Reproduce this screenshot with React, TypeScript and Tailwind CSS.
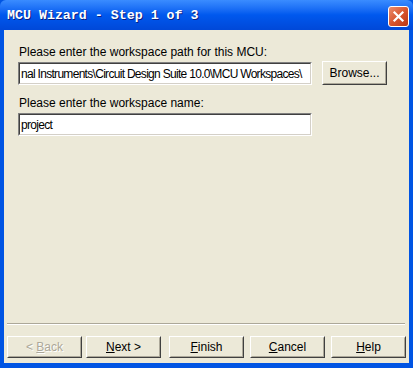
import React from 'react'

const ui = { fontFamily: '"Liberation Sans", Arial, sans-serif' }

function Btn({label,u,rest,disabled,className}:{label?:string,u:string,rest:string,disabled?:boolean,className?:string}){
  return (
    <div className={`h-[22px] border border-t-white border-l-white border-r-[#404040] border-b-[#404040] ${className||''}`}>
      <div className="h-full flex items-center justify-center border border-t-[#ece9d8] border-l-[#ece9d8] border-r-[#aca899] border-b-[#aca899] text-[12px] leading-none">
        <span className={disabled?'text-[#aca899] [text-shadow:1px_1px_0_#fff]':'text-black'}>
          {label}<span className="underline">{u}</span>{rest}
        </span>
      </div>
    </div>
  )
}

function Field({children}:{children:React.ReactNode}){
  return (
    <div className="h-[23px] w-[294px] border border-t-[#808080] border-l-[#808080] border-r-white border-b-white">
      <div className="h-full bg-white border border-t-[#404040] border-l-[#404040] border-r-[#d4d0c8] border-b-[#d4d0c8] flex items-center pl-[1px] overflow-hidden whitespace-nowrap text-[12px] tracking-[-0.7px] text-black">
        {children}
      </div>
    </div>
  )
}

export default function App(){
  return (
    <div className="w-[413px] h-[368px] flex flex-col bg-[#0054e3]" style={ui}>
      {/* title bar */}
      <div className="h-[30px] flex items-center justify-between pl-[7px] pr-[4px] bg-gradient-to-b from-[#3a8cff] via-[#0058ee] to-[#0048d8] rounded-t-[6px]">
        <span className="text-white font-bold text-[13.3px] mt-[1px] [text-shadow:1px_1px_0_#0a1e80]" style={{fontFamily:'"Liberation Mono", "Courier New", monospace'}}>MCU Wizard - Step 1 of 3</span>
        <div className="w-[21px] h-[21px] mt-[2px] rounded-[3px] border border-white bg-gradient-to-br from-[#ea8c6c] via-[#d8562f] to-[#bb3612] flex items-center justify-center">
          <svg width="13" height="13" viewBox="0 0 13 13"><path d="M2.5 2.5 L10.5 10.5 M10.5 2.5 L2.5 10.5" stroke="white" strokeWidth="2.2" strokeLinecap="square"/></svg>
        </div>
      </div>
      {/* body */}
      <div className="flex-1 mx-[4px] mb-[5px] bg-[#ece9d8] flex flex-col pl-[14px] pt-[15px]">
        <div className="h-[14px] leading-[14px] text-[12px] text-black ml-[1px]">Please enter the workspace path for this MCU:</div>
        <div className="flex items-start mt-[3px]">
          <Field>nal Instruments\Circuit Design Suite 10.0\MCU Workspaces\</Field>
          <Btn className="w-[65px] ml-[10px] h-[24px] -mt-[1px]" label="Browse..." u="" rest="" />
        </div>
        <div className="h-[14px] leading-[14px] text-[12px] text-black ml-[1px] mt-[11px]">Please enter the workspace name:</div>
        <div className="mt-[3px]">
          <Field>project</Field>
        </div>
        <div className="flex-1" />
        <div className="-ml-[11px] mr-[4px] border-t border-t-[#aca899] border-b border-b-white" />
        <div className="flex -ml-[11px] mt-[11px] mb-[5px]">
          <Btn className="w-[75px]" label="< " u="B" rest="ack" disabled />
          <Btn className="w-[75px] ml-[4px]" label="" u="N" rest="ext >" />
          <Btn className="w-[75px] ml-[8px]" label="" u="F" rest="inish" />
          <Btn className="w-[75px] ml-[6px]" label="" u="C" rest="ancel" />
          <Btn className="w-[75px] ml-[6px]" label="" u="H" rest="elp" />
        </div>
      </div>
    </div>
  )
}
